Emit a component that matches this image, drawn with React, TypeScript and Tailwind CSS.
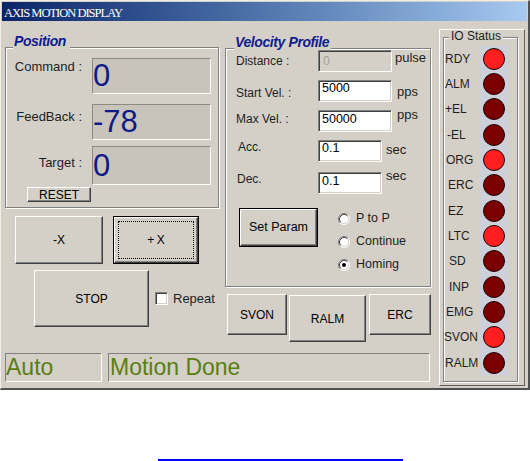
import React from "react";

const raised =
  "border border-t-white border-l-white border-b-[#404040] border-r-[#404040] shadow-[inset_-1px_-1px_0_#808080]";
const sunken =
  "border border-t-[#808080] border-l-[#808080] border-b-white border-r-white shadow-[inset_1px_1px_0_#404040,inset_-1px_-1px_0_#d4d0c8]";
const etched = "border border-[#808080] shadow-[inset_1px_1px_0_#fff,1px_1px_0_#fff]";
const posField =
  "border border-t-[#8c8983] border-l-[#8c8983] border-b-white border-r-white bg-[#c8c4bc] text-[31px] text-[#0f1a86] overflow-hidden";

function Btn({ className, children }: { className: string; children: React.ReactNode }) {
  return (
    <div className={`${className} ${raised} flex items-center justify-center text-[12px] leading-none text-black`}>
      {children}
    </div>
  );
}

function DefBtn({
  className,
  children,
  focus,
}: {
  className: string;
  children: React.ReactNode;
  focus?: boolean;
}) {
  return (
    <div className={`${className} border border-black flex`}>
      <div className={`flex-1 ${raised} ${focus ? "p-[3px]" : ""} flex`}>
        <div
          className={`flex-1 flex items-center justify-center text-black ${
            focus ? "border border-dotted border-black text-[12px]" : "text-[12.5px]"
          } leading-none`}
        >
          {children}
        </div>
      </div>
    </div>
  );
}

function Radio({ checked }: { checked?: boolean }) {
  return (
    <svg width="12" height="12" viewBox="0 0 12 12" className="shrink-0">
      <circle cx="6" cy="6" r="5" fill="#ffffff" />
      <path d="M2.11 9.89 A5.5 5.5 0 0 1 9.89 2.11" fill="none" stroke="#808080" strokeWidth="1" />
      <path d="M9.89 2.11 A5.5 5.5 0 0 1 2.11 9.89" fill="none" stroke="#ffffff" strokeWidth="1" />
      <path d="M2.82 9.18 A4.5 4.5 0 0 1 9.18 2.82" fill="none" stroke="#404040" strokeWidth="1" />
      <path d="M9.18 2.82 A4.5 4.5 0 0 1 2.82 9.18" fill="none" stroke="#d4d0c8" strokeWidth="1" />
      {checked && <circle cx="6" cy="6" r="2" fill="#000000" />}
    </svg>
  );
}

const leds: { name: string; on: boolean; pl: string }[] = [
  { name: "RDY", on: true, pl: "pl-[1px]" },
  { name: "ALM", on: false, pl: "pl-[1px]" },
  { name: "+EL", on: false, pl: "pl-[1px]" },
  { name: "-EL", on: false, pl: "pl-[3px]" },
  { name: "ORG", on: true, pl: "pl-[2px]" },
  { name: "ERC", on: false, pl: "pl-[4px]" },
  { name: "EZ", on: false, pl: "pl-[4px]" },
  { name: "LTC", on: true, pl: "pl-[4px]" },
  { name: "SD", on: false, pl: "pl-[5px]" },
  { name: "INP", on: false, pl: "pl-[5px]" },
  { name: "EMG", on: false, pl: "pl-[2px]" },
  { name: "SVON", on: true, pl: "pl-[0px]" },
  { name: "RALM", on: false, pl: "pl-[1px]" },
];

export default function App() {
  return (
    <div className="w-[530px] h-[461px] bg-white font-['Liberation_Sans',Arial,sans-serif] text-black overflow-hidden flex flex-col">
      <div className="w-[530px] h-[390px] shrink-0 bg-[#d4d0c8] border-t border-l border-t-[#f0eee8] border-l-[#f0eee8] border-r-2 border-b-2 border-r-[#505050] border-b-[#505050] flex flex-col">
        {/* title bar */}
        <div className="mt-[1px] mx-[1px] h-[19px] shrink-0 bg-linear-to-r from-[#0a246a] to-[#a6caf0] pl-[2px] pt-[3px] overflow-hidden">
          <div className="font-['Liberation_Serif','Times_New_Roman',serif] text-[12.5px] leading-[17px] tracking-[-1px] text-white">
            AXIS MOTION DISPLAY
          </div>
        </div>

        {/* body */}
        <div className="flex">
          <div className="w-[438px] flex flex-col">
            <div className="flex items-start">
              {/* left column */}
              <div className="ml-[4px] w-[214px] flex flex-col">
                <div className={`mt-[26px] h-[161px] ${etched} flex flex-col`}>
                  <div className="-mt-[15px] -mb-[2px] ml-[7px] h-[17px] w-fit pl-[1px] pr-[4px] bg-[#d4d0c8] text-[14px] tracking-[-0.4px] leading-[17px] font-bold italic text-[#101c8c]">
                    Position
                  </div>
                  <div className="mt-[10px] flex items-start">
                    <div className="w-[76px] pt-[1px] text-right text-[13px] leading-[16px] text-[#1e1e1e] whitespace-pre">
                      Command :
                    </div>
                    <div className={`ml-[10px] w-[119px] h-[36px] ${posField} leading-[34px]`}>0</div>
                  </div>
                  <div className="mt-[10px] flex items-start">
                    <div className="w-[76px] pt-[5px] text-right text-[13px] leading-[16px] text-[#1e1e1e] whitespace-pre">
                      FeedBack :
                    </div>
                    <div className={`ml-[10px] w-[119px] h-[36px] ${posField} leading-[34px]`}>-78</div>
                  </div>
                  <div className="mt-[6px] flex items-start">
                    <div className="w-[76px] pt-[9px] text-right text-[13px] leading-[16px] text-[#1e1e1e] whitespace-pre">
                      Target :
                    </div>
                    <div className={`ml-[10px] w-[119px] h-[39px] ${posField} leading-[37px]`}>0</div>
                  </div>
                  <Btn className="mt-[2px] ml-[21px] w-[64px] h-[15px]">RESET</Btn>
                </div>

                <div className="mt-[8px] flex">
                  <Btn className="ml-[10px] w-[88px] h-[48px]">-X</Btn>
                  <DefBtn className="ml-[10px] w-[86px] h-[48px]" focus>
                    +{"\u2009"}X
                  </DefBtn>
                </div>
                <div className="mt-[6px] flex items-center">
                  <Btn className="ml-[29px] w-[115px] h-[57px]">STOP</Btn>
                  <div className={`ml-[6px] w-[13px] h-[13px] bg-white ${sunken}`} />
                  <span className="ml-[5px] text-[13px] leading-[15px] text-[#1e1e1e]">Repeat</span>
                </div>
              </div>

              {/* middle column */}
              <div className="ml-[6px] w-[206px] flex flex-col">
                <div className={`mt-[27px] h-[239px] ${etched} flex flex-col`}>
                  <div className="-mt-[15px] -mb-[2px] ml-[8px] h-[17px] w-fit pl-[1px] pr-[2px] bg-[#d4d0c8] text-[14px] tracking-[-0.4px] leading-[17px] font-bold italic text-[#101c8c]">
                    Velocity Profile
                  </div>

                  {/* Distance */}
                  <div className="mt-[1px] flex items-start">
                    <div className="ml-[10px] w-[82px] pt-[4px] text-[12px] leading-[14px] text-[#1e1e1e] whitespace-pre">
                      Distance :
                    </div>
                    <div className={`w-[74px] h-[22px] bg-[#d4d0c8] ${sunken} pl-[4px] text-[12.5px] leading-[20px] text-[#a8a49c]`}>
                      0
                    </div>
                    <div className="ml-[3px] text-[13px] leading-[15px] text-[#1e1e1e]">pulse</div>
                  </div>

                  {/* Start Vel */}
                  <div className="mt-[8px] flex items-start">
                    <div className="ml-[10px] w-[82px] pt-[6px] text-[12px] leading-[14px] text-[#1e1e1e] whitespace-pre">
                      Start Vel. :
                    </div>
                    <div className={`w-[74px] h-[22px] bg-white ${sunken} pl-[3px] text-[12.5px] leading-[14px]`}>5000</div>
                    <div className="ml-[5px] mt-[4px] text-[13px] leading-[15px] text-[#1e1e1e]">pps</div>
                  </div>

                  {/* Max Vel */}
                  <div className="mt-[8px] flex items-start">
                    <div className="ml-[10px] w-[82px] pt-[2px] text-[12px] leading-[14px] text-[#1e1e1e] whitespace-pre">
                      Max Vel. :
                    </div>
                    <div className={`w-[74px] h-[22px] bg-white ${sunken} pl-[3px] pt-[1px] text-[12.5px] leading-[14px]`}>
                      50000
                    </div>
                    <div className="ml-[5px] -mt-[3px] text-[13px] leading-[15px] text-[#1e1e1e]">pps</div>
                  </div>

                  {/* Acc */}
                  <div className="mt-[8px] flex items-start">
                    <div className="ml-[10px] w-[82px] pl-[2px] text-[12px] leading-[14px] text-[#1e1e1e]">Acc.</div>
                    <div className={`w-[64px] h-[22px] bg-white ${sunken} pl-[3px] text-[12.5px] leading-[14px]`}>0.1</div>
                    <div className="ml-[4px] mt-[2px] text-[13px] leading-[15px] text-[#1e1e1e]">sec</div>
                  </div>

                  {/* Dec */}
                  <div className="mt-[10px] flex items-start">
                    <div className="ml-[10px] w-[82px] pl-[1px] text-[12px] leading-[14px] text-[#1e1e1e]">Dec.</div>
                    <div className={`w-[64px] h-[22px] bg-white ${sunken} pl-[3px] pt-[1px] text-[12.5px] leading-[14px]`}>0.1</div>
                    <div className="ml-[4px] -mt-[4px] text-[13px] leading-[15px] text-[#1e1e1e]">sec</div>
                  </div>

                  {/* Set Param + radios */}
                  <div className="mt-[13px] flex items-start">
                    <DefBtn className="mt-[1px] ml-[13px] w-[79px] h-[39px]">Set Param</DefBtn>
                    <div className="ml-[20px] flex flex-col">
                      {[
                        { t: "P to P", c: false },
                        { t: "Continue", c: false },
                        { t: "Homing", c: true },
                      ].map((r) => (
                        <div key={r.t} className="h-[23px] flex items-center">
                          <Radio checked={r.c} />
                          <span className="ml-[6px] text-[12.5px] leading-[15px] text-[#1e1e1e]">{r.t}</span>
                        </div>
                      ))}
                    </div>
                  </div>
                </div>

                <div className="mt-[7px] flex items-start">
                  <Btn className="ml-[2px] w-[60px] h-[41px]">SVON</Btn>
                  <Btn className="ml-[2px] mt-[1px] w-[77px] h-[47px]">RALM</Btn>
                  <Btn className="ml-[3px] w-[62px] h-[41px]">ERC</Btn>
                </div>
              </div>
            </div>

            {/* status row */}
            <div className="mt-[11px] ml-[4px] flex">
              <div className="w-[97px] h-[29px] border border-t-[#808080] border-l-[#808080] border-b-white border-r-white text-[23px] leading-[27px] text-[#5a7e10] overflow-hidden">
                Auto
              </div>
              <div className="ml-[6px] w-[322px] h-[29px] border border-t-[#808080] border-l-[#808080] border-b-white border-r-white pl-[1px] text-[23px] leading-[27px] text-[#5a7e10] overflow-hidden">
                Motion Done
              </div>
            </div>
          </div>

          {/* IO status panel */}
          <div className="mt-[8px] w-[86px] h-[357px] border border-t-white border-l-white border-b-[#606060] border-r-[#606060] flex flex-col">
            <div className={`mt-[7px] ml-[3px] w-[75px] h-[345px] ${etched} flex flex-col`}>
              <div className="-mt-[8px] ml-[5px] w-fit h-[13px] px-[2px] bg-[#d4d0c8] text-[12px] leading-[13px] text-[#1e1e1e]">
                IO Status
              </div>
              <div className="mt-[3px] flex flex-col">
                {leds.map((l) => (
                  <div key={l.name} className="h-[25.33px] flex items-center">
                    <div className={`w-[36px] ${l.pl} text-[12px] leading-[14px] text-[#1e1e1e]`}>{l.name}</div>
                    <div className="w-[28px] h-full bg-[#cdd0d9] flex items-center justify-center">
                      <div
                        className={`w-[22px] h-[22px] rounded-full border-[1.5px] border-[#1c0000] ${
                          l.on ? "bg-[#ff1f1f]" : "bg-[#7a0000]"
                        }`}
                      />
                    </div>
                  </div>
                ))}
              </div>
            </div>
          </div>
        </div>
      </div>

      <div className="mt-[69px] ml-[158px] w-[245px] h-[2px] shrink-0 bg-[#0000ff]" />
    </div>
  );
}
